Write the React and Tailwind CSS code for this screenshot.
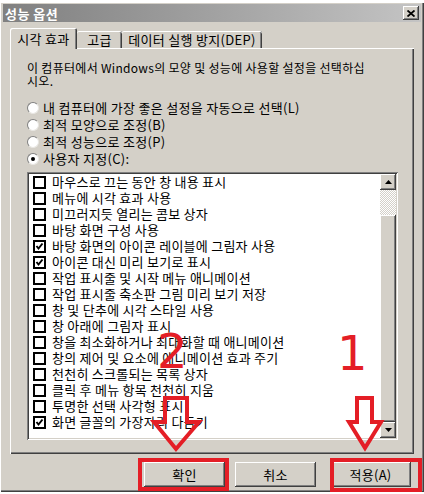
import React from "react";

const raised =
  "shadow-[inset_-1px_-1px_#404040,inset_1px_1px_#ffffff,inset_-2px_-2px_#808080,inset_2px_2px_#d4d0c8]";
const sunken =
  "shadow-[inset_1px_1px_#808080,inset_-1px_-1px_#ffffff,inset_2px_2px_#404040,inset_-2px_-2px_#d4d0c8]";

const radios = [
  { label: "내 컴퓨터에 가장 좋은 설정을 자동으로 선택(L)", on: false },
  { label: "최적 모양으로 조정(B)", on: false },
  { label: "최적 성능으로 조정(P)", on: false },
  { label: "사용자 지정(C):", on: true },
];

const effects = [
  { label: "마우스로 끄는 동안 창 내용 표시", on: false },
  { label: "메뉴에 시각 효과 사용", on: false },
  { label: "미끄러지듯 열리는 콤보 상자", on: false },
  { label: "바탕 화면 구성 사용", on: false },
  { label: "바탕 화면의 아이콘 레이블에 그림자 사용", on: true },
  { label: "아이콘 대신 미리 보기로 표시", on: true },
  { label: "작업 표시줄 및 시작 메뉴 애니메이션", on: false },
  { label: "작업 표시줄 축소판 그림 미리 보기 저장", on: false },
  { label: "창 및 단추에 시각 스타일 사용", on: false },
  { label: "창 아래에 그림자 표시", on: false },
  { label: "창을 최소화하거나 최대화할 때 애니메이션", on: false },
  { label: "창의 제어 및 요소에 애니메이션 효과 주기", on: false },
  { label: "천천히 스크롤되는 목록 상자", on: false },
  { label: "클릭 후 메뉴 항목 천천히 지움", on: false },
  { label: "투명한 선택 사각형 표시", on: false },
  { label: "화면 글꼴의 가장자리 다듬기", on: true },
];

function Radio({ on }) {
  return (
    <span className="relative w-[12px] h-[12px] rounded-full bg-white border border-t-[#808080] border-l-[#808080] border-b-[#e8e6e2] border-r-[#e8e6e2] flex items-center justify-center">
      {on && <span className="w-[4px] h-[4px] rounded-full bg-black" />}
    </span>
  );
}

function Check({ on }) {
  return (
    <span className="w-[13px] h-[13px] border-2 border-black bg-white flex items-center justify-center">
      {on && (
        <svg width="9" height="9" viewBox="0 0 9 9">
          <polyline points="1.5,4 3.5,6.5 7.5,1.5" fill="none" stroke="black" strokeWidth="2" />
        </svg>
      )}
    </span>
  );
}

function ScrollBtn({ up }) {
  return (
    <div className={`h-[16px] bg-[#d4d0c8] flex items-center justify-center ${raised}`}>
      <svg width="7" height="4" viewBox="0 0 7 4">
        <polygon points={up ? "3.5,0 7,4 0,4" : "0,0 7,0 3.5,4"} fill="black" />
      </svg>
    </div>
  );
}

function Button({ children, className = "" }) {
  return (
    <button
      className={`w-[81px] h-[25px] bg-[#d4d0c8] text-[13px] leading-[25px] tracking-[0.3px] text-black ${raised} ${className}`}
    >
      {children}
    </button>
  );
}

export default function App() {
  return (
    <div className="relative w-[424px] h-[494px] overflow-hidden bg-white font-['Noto_Sans_CJK_KR','Noto_Sans',sans-serif] text-black">
      <div className="h-[2px] bg-white" />
      <div className="h-[490px] bg-[#d4d0c8] px-[3px] pt-[2px] flex flex-col shadow-[inset_1px_1px_#ffffff,inset_-1px_-1px_#404040,inset_-2px_-2px_#808080]">
        {/* title bar */}
        <div className="h-[18px] flex items-center justify-between pl-[2px] pr-[2px] bg-gradient-to-r from-[#808080] to-[#c4c4c4]">
          <span className="text-white font-bold text-[13px] tracking-[0.5px] leading-none">성능 옵션</span>
          <span className={`w-[16px] h-[14px] bg-[#d4d0c8] flex items-center justify-center ${raised}`}>
            <svg width="8" height="7" viewBox="0 0 8 7">
              <path d="M0.5 0.5 L7.5 6.5 M7.5 0.5 L0.5 6.5" stroke="black" strokeWidth="1.8" />
            </svg>
          </span>
        </div>

        {/* tabs */}
        <div className="mt-[6px] ml-[7px] flex items-end text-[13px] leading-none tracking-[0.3px]">
          <div className="relative z-10 w-[67px] h-[21px] -mb-[1px] bg-[#d4d0c8] flex items-center justify-center rounded-t-[2px] shadow-[inset_1px_1px_#ffffff,inset_-1px_0_#404040,inset_-2px_0_#808080]">
            시각 효과
          </div>
          <div className="w-[45px] h-[17px] flex items-center justify-center rounded-t-[2px] shadow-[inset_0_1px_#ffffff,inset_-1px_0_#404040,inset_-2px_0_#808080]">
            고급
          </div>
          <div className="w-[140px] h-[17px] flex items-center justify-center rounded-t-[2px] shadow-[inset_0_1px_#ffffff,inset_-1px_0_#404040,inset_-2px_0_#808080]">
            데이터 실행 방지(DEP)
          </div>
        </div>

        {/* tab panel */}
        <div className="mx-[7px] h-[406px] pt-[13px] pl-[17px] pr-[16px] flex flex-col shadow-[inset_1px_1px_#ffffff,inset_-1px_-1px_#404040,inset_-2px_-2px_#808080]">
          <p className="text-[12px] leading-[13px] tracking-[0.3px] whitespace-nowrap">
            이 컴퓨터에서 Windows의 모양 및 성능에 사용할 설정을 선택하십
            <br />
            시오.
          </p>

          <div className="mt-[12px] flex flex-col">
            {radios.map((r) => (
              <div key={r.label} className="h-[17px] flex items-center gap-[4px] text-[13px] leading-[17px] tracking-[0.3px] whitespace-nowrap">
                <Radio on={r.on} />
                <span>{r.label}</span>
              </div>
            ))}
          </div>

          <div className={`mt-[5px] h-[268px] bg-white p-[2px] flex ${sunken}`}>
            <div className="flex-1 flex flex-col">
              {effects.map((e) => (
                <div key={e.label} className="h-[16px] pl-[4px] flex items-center gap-[6px] text-[13px] leading-[16px] tracking-[0.25px] whitespace-nowrap">
                  <Check on={e.on} />
                  <span>{e.label}</span>
                </div>
              ))}
            </div>
            <div className="w-[16px] flex flex-col">
              <ScrollBtn up />
              <div className="h-[25px] bg-[repeating-conic-gradient(#d4d0c8_0_25%,#ffffff_0_50%)] bg-[length:2px_2px]" />
              <div className={`flex-1 bg-[#d4d0c8] ${raised}`} />
              <ScrollBtn />
            </div>
          </div>
        </div>

        {/* buttons */}
        <div className="mt-[8px] pl-[141px] flex">
          <Button>확인</Button>
          <Button className="ml-[10px]">취소</Button>
          <Button className="ml-[14px]">적용(A)</Button>
        </div>
      </div>

      {/* red annotations */}
      <div className="absolute left-[138px] top-[458px] w-[91px] h-[33px] border-4 border-[#e41e26]" />
      <div className="absolute left-[330px] top-[458px] w-[92px] h-[34px] border-4 border-[#e41e26]" />
      <svg className="absolute left-0 top-0 pointer-events-none" width="424" height="494">
        <polygon
          points="165,398 187,398 187,422 199,422 176,449 154,422 165,422"
          fill="none"
          stroke="#e41e26"
          strokeWidth="4"
        />
        <polygon
          points="357,398 372,398 372,422 381,422 365,448 349,422 357,422"
          fill="none"
          stroke="#e41e26"
          strokeWidth="4"
        />
      </svg>
      <span className="absolute left-[157px] top-[327px] text-[48px] leading-none text-[#e41e26] font-['DejaVu_Sans',sans-serif]">
        2
      </span>
      <span className="absolute left-[337px] top-[329px] text-[48px] leading-none text-[#e41e26] font-['DejaVu_Sans',sans-serif]">
        1
      </span>
    </div>
  );
}
